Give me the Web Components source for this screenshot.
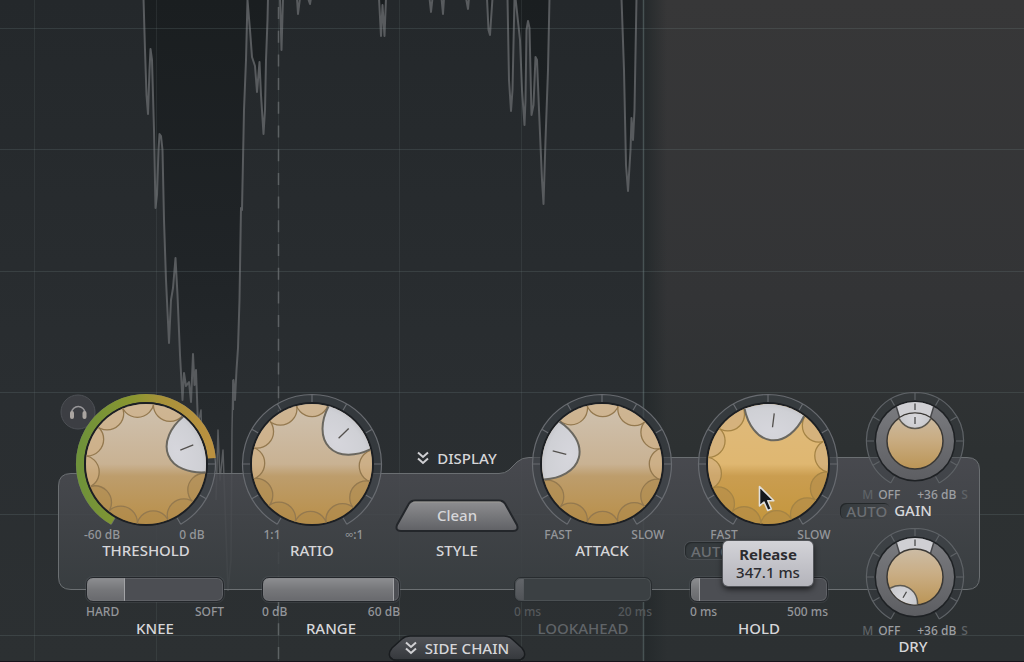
<!DOCTYPE html>
<html lang="en">
<head>
<meta charset="utf-8">
<title>Compressor</title>
<style>
  body {
    margin: 0;
    background: #292d2f;
    color: #d6d6d9;
    font: 500 15px/16px "Noto Sans", "Open Sans", sans-serif;
  }
</style>
</head>
<body>
<compressor-view></compressor-view>

<script>
const define = (name, build, css) => {
  customElements.define(name, class extends HTMLElement {
    connectedCallback() {
      if (this.shadowRoot) return;
      const root = this.attachShadow({ mode: "open" });
      root.innerHTML = `<style>*{box-sizing:border-box}button{font:inherit;color:inherit;background:none;border:0;padding:0;margin:0}svg{display:block}${css}</style>${build(this)}`;
    }
  });
};

const polar = (r, deg) => {
  const a = deg * Math.PI / 180;
  return [(r * Math.sin(a)).toFixed(2), (-r * Math.cos(a)).toFixed(2)];
};
const arc = (r, from, to) =>
  `M${polar(r, from)} A${r} ${r} 0 ${to - from > 180 ? 1 : 0} 1 ${polar(r, to)}`;
const ticks = (inner, outer) =>
  [-150, -120, -90, -60, -30, 0, 30, 60, 90, 120, 150]
    .map(a => `M${polar(inner, a)} L${polar(outer, a)}`).join(" ");

const chevrons = `<svg class="chev" width="12" height="14" viewBox="0 0 12 14" fill="none" stroke="#d0d0d3" stroke-width="2"><path d="M1 1.5l5 4.5 5-4.5M1 7.5l5 4.5 5-4.5"/></svg>`;

/* Level history behind the controls */
define("level-graph", () => `
<svg width="100%" height="100%" viewBox="0 0 1024 662" preserveAspectRatio="none" aria-hidden="true">
  <defs>
    <linearGradient id="bg" x2="0" y2="1"><stop offset="0" stop-color="#24282b"/><stop offset=".6" stop-color="#2a2e31"/><stop offset="1" stop-color="#2c3032"/></linearGradient>
    <linearGradient id="idle" x2="0" y2="1"><stop offset="0" stop-color="#373738"/><stop offset=".45" stop-color="#333436"/><stop offset=".68" stop-color="#2d3132"/><stop offset="1" stop-color="#2c3032"/></linearGradient>
    <linearGradient id="edge"><stop offset="0" stop-color="#24292b"/><stop offset="1" stop-color="#24292b" stop-opacity="0"/></linearGradient>
    <linearGradient id="deep" x2="0" y2="440" gradientUnits="userSpaceOnUse"><stop offset="0" stop-color="#1a1e20"/><stop offset=".6" stop-color="#202427"/><stop offset="1" stop-color="#272b2e"/></linearGradient>
  </defs>
  <rect width="1024" height="662" fill="url(#bg)"/>
  <rect x="643" width="381" height="662" fill="url(#idle)"/>
  <rect x="643" width="24" height="662" fill="url(#edge)"/>
  <path fill="url(#deep)" d="M143.500 -2L145 50 146.500 95 148 114 149.500 70 150.500 49 152 60 154 130 155.500 208 157 195 158.500 150 159.500 134 161 136 162.500 150 164 220 166 280 169 343 171 300 173 288 175.500 258 177.500 295 180 355 182.500 400 184 373 186 386 189 382 191 402 193 354 194.500 385 196 370 198 425 200 470H232L233 410 235 400 238 348 239.500 300 241 208 244 110 246 60 247.500 0 250 30 252 57 255 66 257 92 259.500 62 261 95 263.500 134 265 110 266 60 267.500 20 268 -2Z"/>
  <g fill="none" stroke="#585b5e" stroke-width="2" stroke-linejoin="round">
    <path d="M143.500 -2L145 50 146.500 95 148 114 149.500 70 150.500 49 152 60 154 130 155.500 208 157 195 158.500 150 159.500 134 161 136 162.500 150 164 220 166 280 169 343 171 300 173 288 175.500 258 177.500 295 180 355 182.500 400 184 373 186 386 189 382 191 402 193 354 194.500 385 196 370 198 425 200 470 M233 410L233.500 380 235 400 236.500 370 238 348 239.500 300 241 208 242 210 244 110 246 60 247.500 0 250 30 252 57 255 66 257 92 259.500 62 261 95 263.500 134 265 110 266 60 267.500 20 268 -2"/>
    <path stroke-width="1.500" d="M198 425L201 410 203 480 M216 500L218 430 220 480 223 450 228 590 231 560 232 430 233 380"/>
    <g fill="url(#deep)">
      <path d="M280 -2L281.500 50 283 -2 M297 -2L298 14 300 -2 M308 -2L310 4 311 -2 M379 -2L381 36 382.500 5 384.500 36 386 -2 M429.500 -2L431 12 432.500 -2 M441.500 -2L443 14 444 -2 M466 -2L468 9 469 -2 M487 -2L488.500 30 490 35 491 20 492.500 -2"/>
      <path d="M507.500 -2L509 80 511 111 512.500 90 514.500 -2 M515.500 -2L520 40 522 90 524.500 125 525.500 100 526.500 30 528 21 529.500 28 531.500 115 533.500 105 535.500 57 537 60 539 110 542 180 543.500 204 545.500 140 548 70 549.500 -2 M621.500 -2L624 70 626 165 628 191 630.500 150 631.500 118 633 140 634.500 110 636.500 -2"/>
    </g>
  </g>
  <g fill="none" stroke="#7d9090" stroke-opacity=".2">
    <path d="M0 28.500H1024M0 149.500H1024M0 271.500H1024M0 392.500H1024M0 514.500H1024M0 635.500H1024"/>
    <path stroke-opacity=".14" d="M34.500 0V662M156.500 0V662M278.500 0V662M399.500 0V662M521.500 0V662"/>
    <path stroke-opacity=".4" stroke-width="1.500" d="M643.500 0V662"/>
  </g>
  <path d="M278.500 7V662" stroke="#6b6f71" stroke-opacity=".75" stroke-width="1.500" stroke-dasharray="12 11.700"/>
  <path d="M0 661.500H1024" stroke="#17141c"/>
</svg>`, `:host{display:block;min-height:0}`);

/* Raised plate that carries the knobs */
define("deck-plate", () => `
<svg width="100%" height="133" viewBox="0 0 922 133" preserveAspectRatio="none" aria-hidden="true">
  <defs><linearGradient id="p" x2="0" y2="1"><stop offset="0" stop-color="#4c4d53"/><stop offset=".5" stop-color="#43464a"/><stop offset="1" stop-color="#3a3f42"/></linearGradient></defs>
  <path d="M.5 29Q.5 16.500 13 16.500H441Q447 16.500 451 13L459 5Q464 .5 471 .5H909Q921.500 .5 921.500 13V120Q921.500 132.500 909 132.500H13Q.5 132.500 .5 120Z" fill="url(#p)" fill-opacity=".87" stroke="#6b6f72" vector-effect="non-scaling-stroke"/>
</svg>`, `:host{display:block}`);

define("rotary-knob", el => {
  const name = el.getAttribute("name"), angle = +el.getAttribute("angle");
  const hot = el.hasAttribute("hot"), lit = el.getAttribute("lit"), auto = el.hasAttribute("auto");
  const c = hot ? ["#dfba7c", "#dfb771", "#ca9d50", "#c4963c"] : ["#cfc2b0", "#c9b293", "#bd9d6c", "#b98f48"];
  let scallops = "";
  for (let i = 0; i < 10; i++) {
    const [x, y] = polar(64, angle + 31 + 14.9 + i * 29.8);
    const low = +y > 10;
    scallops += `<circle cx="${x}" cy="${y}" r="16.700" fill="${low ? "#ab884c" : "#cfae80"}" fill-opacity="${low ? .45 : .6}" stroke="${hot ? "#a58445" : "#94794f"}" stroke-width="1.300"/>`;
  }
  return `
<div class="dial">
<svg width="144" height="136" viewBox="-72 -72 144 136" aria-hidden="true">
  <defs>
    <linearGradient id="f" x2="0" y2="1"><stop offset="0" stop-color="${c[0]}"/><stop offset=".5" stop-color="${c[1]}"/><stop offset=".6" stop-color="${c[2]}"/><stop offset="1" stop-color="${c[3]}"/></linearGradient>
    <linearGradient id="lit"><stop offset="0" stop-color="#6f923a"/><stop offset=".4" stop-color="#8a9630"/><stop offset=".62" stop-color="#a8923a"/><stop offset="1" stop-color="#bb9140"/></linearGradient>
    <radialGradient id="cap" cy=".8" r=".8"><stop offset="0" stop-color="#d6d6dc"/><stop offset=".6" stop-color="#cfd0d5"/><stop offset="1" stop-color="#b4b5bb"/></radialGradient>
    <clipPath id="disc"><circle r="60"/></clipPath>
  </defs>
  <path d="${arc(65.5, -150, 150)}" fill="none" stroke="#3c4146" stroke-opacity=".6" stroke-width="8"/>
  <path d="${arc(69.5, -150, 150)} ${ticks(62, 69.5)}" fill="none" stroke="#686b70" stroke-width="1.200"/>
  ${lit ? `<path d="${arc(66, -150, +lit)}" fill="none" stroke="url(#lit)" stroke-width="8"/>` : ""}
  <circle r="62" fill="#1c1f23"/>
  <circle r="60" fill="url(#f)"/>
  <g clip-path="url(#disc)">${scallops}
    <g transform="rotate(${angle})">
      <path d="M-30 -52C-25 -37 -14 -24 0 -24S25 -37 30 -52L40 -70H-40Z" fill="url(#cap)" stroke="#6a675f" stroke-width="2"/>
    </g>
  </g>
  <path transform="rotate(${angle})" d="M0 -37V-51" stroke="#53504d" stroke-width="1.300"/>
</svg>
<input id="k" type="range" min="-150" max="150" value="${angle}" aria-label="${name}">
</div>
<div class="ends"><span>${el.getAttribute("low")}</span><span>${el.getAttribute("high")}</span></div>
<div class="title">${auto ? `<button type="button">AUTO</button>` : `<label for="k">${name}</label>`}</div>
<slot></slot>`;
}, `
:host{display:block;position:relative}
.dial{display:grid;justify-content:center}
.dial>*{grid-area:1/1}
input{opacity:0;margin:0;width:120px;height:120px;place-self:center}
.ends{display:grid;grid-template-columns:1fr 1fr;column-gap:16px;padding-left:2px;text-align:center;font-size:12px;line-height:14px;color:#94969a}
:host([narrow]) .ends{column-gap:0}
.title{text-align:center;height:16px;display:grid;justify-content:center}
button{height:17px;padding:0 6px;color:#6c6f73;background:#353a3d;border-radius:6px;box-shadow:inset 1px 1px 1px #24282a,0 0 0 1px #4b4f53}
:host([auto]) .title{justify-content:start}
`);

/* Ring for panning around a small level knob */
define("dual-knob", el => {
  const name = el.getAttribute("name"), angle = +el.getAttribute("angle");
  return `
<div class="dial">
<svg width="104" height="95" viewBox="-52 -49 104 95" aria-hidden="true">
  <defs>
    <linearGradient id="ring" x2="0" y2="1"><stop offset="0" stop-color="#7b7c80"/><stop offset="1" stop-color="#5d5e62"/></linearGradient>
    <linearGradient id="f" x2="0" y2="1"><stop offset="0" stop-color="#ccbca5"/><stop offset=".45" stop-color="#c9ad84"/><stop offset="1" stop-color="#bb9556"/></linearGradient>
    <radialGradient id="cap" cy=".7" r=".7"><stop offset="0" stop-color="#d8d8dc"/><stop offset="1" stop-color="#bcbdc1"/></radialGradient>
    <clipPath id="disc"><circle r="27.500"/></clipPath>
    <clipPath id="outer"><circle r="39"/></clipPath>
  </defs>
  <path d="${arc(44.5, -150, 150)}" fill="none" stroke="#3c4146" stroke-opacity=".4" stroke-width="9"/>
  <path d="${arc(48.5, -150, 150)} ${ticks(41, 48.5)}" fill="none" stroke="#5e6266" stroke-width="1.200"/>
  <circle r="40.500" fill="#1e2124"/>
  <circle r="39" fill="url(#ring)"/>
  <path clip-path="url(#outer)" d="M-15 -22L-21 -42H21L15 -22Z" fill="#cfcfd3" stroke="#47484b" stroke-width="1.500"/>
  <path d="M0 -37.500V-31" stroke="#4a4a4a" stroke-width="1.300"/>
  <circle r="28" fill="url(#f)" stroke="#3a3835" stroke-width="1.500"/>
  <g transform="rotate(${angle})">
    <circle clip-path="url(#disc)" cy="-30" r="17.500" fill="url(#cap)" stroke="#5d5950" stroke-width="1.500"/>
    <path d="M0 -24V-17" stroke="#4a4a4a" stroke-width="1.300"/>
  </g>
</svg>
<input id="k" type="range" min="-150" max="150" value="${angle}" aria-label="${name}">
</div>
<div class="ends"><span class="dim">M</span><span>OFF</span><span class="far">+36 dB</span><span class="dim">S</span></div>
<div class="title">${el.hasAttribute("auto") ? `<button type="button">AUTO</button>` : ""}<label for="k">${name}</label></div>`;
}, `
:host{display:block}
.dial{display:grid;justify-content:center}
.dial>*{grid-area:1/1}
input{opacity:0;margin:0;width:80px;height:80px;place-self:center}
.ends{display:flex;justify-content:center;gap:5px;font-size:12px;line-height:16px;color:#9d9fa2;white-space:nowrap}
.far{margin-left:12px}
.dim{color:#5f6367}
.title{display:grid;grid-template-columns:minmax(0,1fr) auto minmax(0,1fr);column-gap:4px;padding-right:4px;line-height:15px}
label{grid-column:2}
button{grid-column:1;grid-row:1;justify-self:end;height:16px;padding:0 3px 0 6px;color:#6c6f73;border-radius:6px;background:linear-gradient(90deg,#353a3d,#3d4144 60%,transparent);box-shadow:inset 1px 1px 0 #24282a}
`);

define("bar-slider", el => `
<input id="s" type="range" min="0" max="138" value="${el.getAttribute("value")}" style="--v:${el.getAttribute("value") / 1.38}%" ${el.hasAttribute("disabled") ? "disabled" : ""}>
<div class="ends"><span>${el.getAttribute("low")}</span><span>${el.getAttribute("high")}</span></div>
<label for="s">${el.getAttribute("name")}</label>`, `
:host{display:block;text-align:center}
input{appearance:none;-webkit-appearance:none;display:block;margin:0;width:100%;height:25px;border:1px solid #23262a;border-radius:7px;
 background:linear-gradient(90deg,transparent calc(100% - 1px),#a2a3a6 0) 0 0/var(--v) 100% no-repeat,linear-gradient(#8d8e91,#76777a 50%,#68696d) 0 0/var(--v) 100% no-repeat,#4c4e53;
 box-shadow:0 0 0 1px rgba(110,114,118,.2),inset 0 0 0 1px rgba(130,132,136,.35)}
input::-webkit-slider-thumb{-webkit-appearance:none;width:1px;height:23px;background:none}
.ends{display:flex;justify-content:space-between;font-size:12px;line-height:19px;color:#94969a}
label{display:block;line-height:14px}
:host([disabled]) input{border-color:#282c2f;background:linear-gradient(#63666a,#505357) 0 0/var(--v) 100% no-repeat,#3b4043;box-shadow:inset 0 0 0 1px #4b5053}
:host([disabled]) .ends{color:#54585b}
:host([disabled]) label{color:#606468}
`);

define("style-column", () => `
<button class="display" type="button">${chevrons}<span>DISPLAY</span></button>
<button class="choice" id="c" type="button">
  <svg width="100%" height="34" viewBox="0 0 124 34" preserveAspectRatio="none" aria-hidden="true">
    <defs><linearGradient id="t" x2="0" y2="1"><stop offset="0" stop-color="#8f8f92"/><stop offset=".5" stop-color="#77787b"/><stop offset="1" stop-color="#606165"/></linearGradient></defs>
    <path d="M20 1.500H104Q108 1.500 110 4.500L122 26Q124 32 118 32H6Q0 32 2 26L14 4.500Q16 1.500 20 1.500Z" fill="url(#t)" stroke="#23262a" stroke-width="2"/>
    <path d="M18 3H106" stroke="#aaa69f" stroke-opacity=".6"/>
  </svg><span>Clean</span>
</button>
<label for="c">STYLE</label>`, `
:host{display:flex;flex-direction:column;padding-top:56px;text-align:center}
.display{display:flex;align-items:center;justify-content:center;gap:8px;height:20px;margin-bottom:31px}
.choice{display:grid;height:34px;margin-bottom:9px;line-height:32px}
.choice>*{grid-area:1/1}
`);

define("side-chain", () => `
<button type="button">
  <svg width="138" height="26" viewBox="0 0 138 26" aria-hidden="true">
    <defs><linearGradient id="g" x2="0" y2="1"><stop offset="0" stop-color="#525459"/><stop offset="1" stop-color="#35383c"/></linearGradient></defs>
    <path d="M22 1H116Q121 1 124 4L134 13Q138 18 136 22Q134 25 130 25H8Q4 25 2 22Q0 18 4 13L14 4Q17 1 22 1Z" fill="url(#g)" stroke="#191c1f" stroke-width="1.500"/>
  </svg>
  <span>${chevrons}SIDE CHAIN</span>
</button>`, `
:host{display:grid;justify-content:center}
button{display:grid;align-items:center}
button>*{grid-area:1/1}
span{display:flex;justify-content:center;align-items:center;gap:8px;white-space:nowrap}
`);

define("value-tip", () => `<strong><slot name="name"></slot></strong><slot></slot>`, `
:host{position:absolute;left:calc(50% - 45px);top:149px;width:90px;height:45px;padding:4px 0;box-sizing:border-box;text-align:center;line-height:18px;font-weight:500;color:#2c2c30;
 background:linear-gradient(#d3d3d8,#b4b4bb);border-radius:5px;box-shadow:0 0 0 1px #53555a,0 3px 6px rgba(0,0,0,.7);white-space:nowrap}
strong{display:block;font-weight:700}
`);

define("mouse-pointer", () => `<svg width="18" height="28" viewBox="0 0 18 28" aria-hidden="true"><path d="M1.500 1.500V21L6 17 9.700 25.500 13.300 24 9.800 15.800H15.800Z" fill="#14171c" stroke="#e0dfdc" stroke-width="1.600" stroke-linejoin="round"/></svg>`,
`:host{position:absolute;left:calc(50% - 10px);top:93px;pointer-events:none}`);

define("listen-button", () => `<button type="button" aria-label="Listen"><svg width="36" height="36" viewBox="0 0 36 36"><circle cx="18" cy="18" r="17" fill="#3c3e43" stroke="#4d5055"/><path d="M11.500 20V18.500A6.800 6.800 0 0 1 25 18.500V20" fill="none" stroke="#98979a" stroke-width="1.600"/><rect x="10" y="17" width="4" height="8" rx="2" fill="#aaa5a1"/><rect x="22.500" y="17" width="4" height="8" rx="2" fill="#aaa5a1"/></svg></button>`,
`:host{position:absolute;left:calc(50% - 86px);top:2px;z-index:-1}`);

define("compressor-view", () => `
<level-graph></level-graph>
<main>
  <deck-plate></deck-plate>
  <div class="deck">
    <rotary-knob name="THRESHOLD" angle="68" lit="85" low="-60 dB" high="0 dB"><listen-button></listen-button></rotary-knob>
    <rotary-knob name="RATIO" angle="46" low="1:1" high="∞:1" narrow></rotary-knob>
    <style-column></style-column>
    <rotary-knob name="ATTACK" angle="-75" low="FAST" high="SLOW"></rotary-knob>
    <rotary-knob name="RELEASE" angle="7" low="FAST" high="SLOW" hot auto>
      <mouse-pointer></mouse-pointer>
      <value-tip><span slot="name">Release</span>347.1 ms</value-tip>
    </rotary-knob>
    <div class="levels">
      <dual-knob name="GAIN" angle="0" auto></dual-knob>
      <dual-knob name="DRY" angle="-150"></dual-knob>
    </div>
    <div class="bars">
      <bar-slider name="KNEE" value="39" low="HARD" high="SOFT"></bar-slider>
      <bar-slider name="RANGE" value="133" low="0 dB" high="60 dB"></bar-slider>
      <bar-slider name="LOOKAHEAD" value="9" low="0 ms" high="20 ms" disabled></bar-slider>
      <bar-slider name="HOLD" value="9" low="0 ms" high="500 ms"></bar-slider>
    </div>
    <side-chain></side-chain>
  </div>
</main>`, `
:host{display:grid;grid-template-rows:1fr auto;min-height:100vh}
level-graph{grid-area:1/1/3/2;height:100%;contain:size}
main{grid-area:2/1;display:grid}
deck-plate{grid-area:1/1;margin:65px 44px 0 58px}
.deck{grid-area:1/1;display:grid;grid-template-columns:83fr 83fr 62fr 83fr 83fr 64fr;grid-template-rows:167px auto auto;margin:0 45px 1px 63px;isolation:isolate}
.deck>*{min-width:0}
rotary-knob[hot]{z-index:1}
.levels{grid-column:6;grid-row:1/4;display:flex;flex-direction:column;gap:9px}
.bars{grid-area:2/1/3/6;display:grid;grid-template-columns:23fr 138fr 38fr 138fr 114fr 138fr 38fr 138fr 23fr;margin-top:18px}
.bars>:nth-child(1){grid-column:2}
.bars>:nth-child(2){grid-column:4}
.bars>:nth-child(3){grid-column:6}
.bars>:nth-child(4){grid-column:8}
side-chain{grid-area:3/3}
`);
</script>
</body>
</html>
